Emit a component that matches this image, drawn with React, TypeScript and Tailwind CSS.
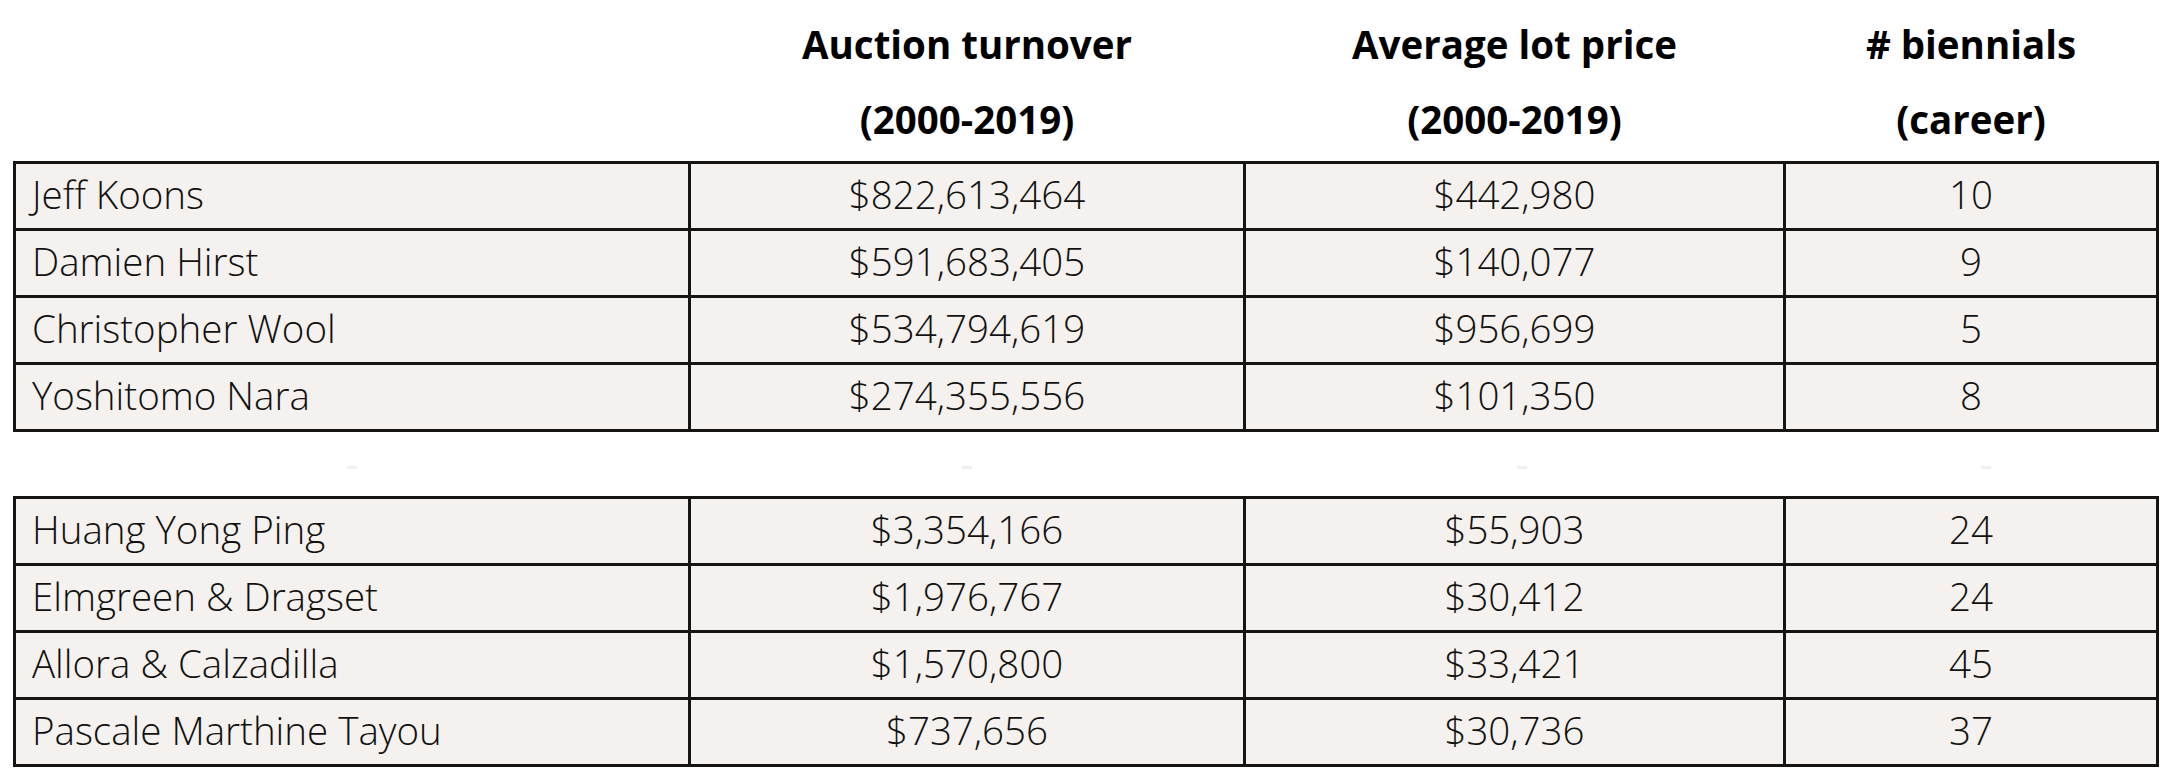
import React from "react";

const top = [
  ["Jeff Koons", "$822,613,464", "$442,980", "10"],
  ["Damien Hirst", "$591,683,405", "$140,077", "9"],
  ["Christopher Wool", "$534,794,619", "$956,699", "5"],
  ["Yoshitomo Nara", "$274,355,556", "$101,350", "8"],
];
const bottom = [
  ["Huang Yong Ping", "$3,354,166", "$55,903", "24"],
  ["Elmgreen & Dragset", "$1,976,767", "$30,412", "24"],
  ["Allora & Calzadilla", "$1,570,800", "$33,421", "45"],
  ["Pascale Marthine Tayou", "$737,656", "$30,736", "37"],
];

const cols = "grid grid-cols-[672px_552px_537px_370px]";

function Table({ rows }: { rows: string[][] }) {
  return (
    <div className={`${cols} gap-[3px] bg-[#151515] p-[3px] w-[2146px]`}>
      {rows.map((r, i) => (
        <React.Fragment key={i}>
          <div className="bg-[#f4f1ee] h-[64px] flex items-center pl-[16px] pb-[2px] text-[38.5px] font-light text-[#111]">
            {r[0]}
          </div>
          <div className="bg-[#f4f1ee] h-[64px] flex items-center justify-center pb-[2px] text-[38.5px] font-light text-[#111]">
            {r[1]}
          </div>
          <div className="bg-[#f4f1ee] h-[64px] flex items-center justify-center pb-[2px] text-[38.5px] font-light text-[#111]">
            {r[2]}
          </div>
          <div className="bg-[#f4f1ee] h-[64px] flex items-center justify-center pb-[2px] text-[38.5px] font-light text-[#111]">
            {r[3]}
          </div>
        </React.Fragment>
      ))}
    </div>
  );
}

export default function App() {
  return (
    <div
      className="w-[2178px] h-[780px] bg-white pl-[13px] overflow-hidden"
      style={{ fontFamily: '"Open Sans", "Noto Sans", sans-serif' }}
    >
      <div className={`${cols} gap-[3px] px-[3px] pt-[7px] h-[161px] text-[38.5px] font-bold text-black leading-[75px] text-center`}>
        <div />
        <div>
          <div>Auction turnover</div>
          <div>(2000-2019)</div>
        </div>
        <div>
          <div>Average lot price</div>
          <div>(2000-2019)</div>
        </div>
        <div>
          <div># biennials</div>
          <div>(career)</div>
        </div>
      </div>
      <Table rows={top} />
      <div className={`${cols} gap-[3px] px-[3px] h-[64px] items-start pt-[34px]`}>
        <div className="flex justify-center"><div className="w-[10px] h-[3px] bg-[#f3efec]" /></div>
        <div className="flex justify-center"><div className="w-[10px] h-[3px] bg-[#f3efec]" /></div>
        <div className="flex justify-center pl-[14px]"><div className="w-[10px] h-[3px] bg-[#f3efec]" /></div>
        <div className="flex justify-center pl-[30px]"><div className="w-[10px] h-[3px] bg-[#f3efec]" /></div>
      </div>
      <Table rows={bottom} />
    </div>
  );
}
